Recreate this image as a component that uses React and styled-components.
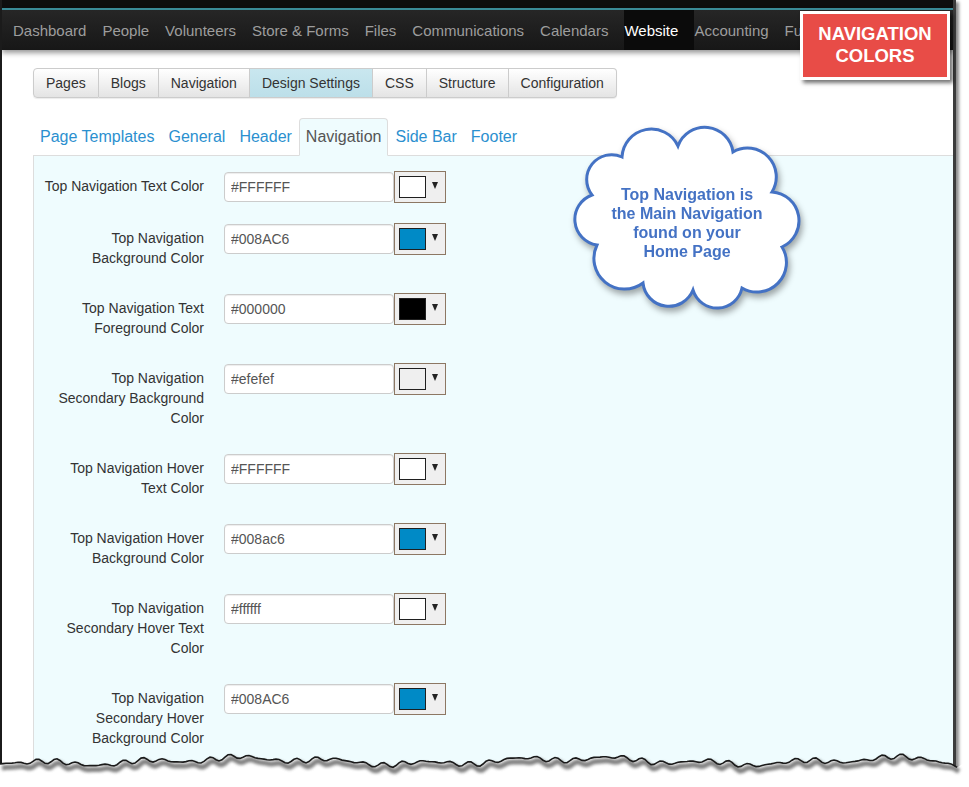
import React from 'react'
import styled, { createGlobalStyle } from 'styled-components'

const GlobalStyle = createGlobalStyle`
  html, body {
    margin: 0;
    padding: 0;
    background: #fff;
  }
  body {
    font-family: "Liberation Sans", Arial, sans-serif;
  }
  * {
    box-sizing: border-box;
  }
`

const mainNav = ['Dashboard', 'People', 'Volunteers', 'Store & Forms', 'Files', 'Communications', 'Calendars', 'Website', 'Accounting', 'Fundraising']
const subNav = ['Pages', 'Blogs', 'Navigation', 'Design Settings', 'CSS', 'Structure', 'Configuration']
const tabs = ['Page Templates', 'General', 'Header', 'Navigation', 'Side Bar', 'Footer']

const rows = [
  { label: ['Top Navigation Text Color'], value: '#FFFFFF', color: '#ffffff' },
  { label: ['Top Navigation', 'Background Color'], value: '#008AC6', color: '#008ac6' },
  { label: ['Top Navigation Text', 'Foreground Color'], value: '#000000', color: '#000000' },
  { label: ['Top Navigation', 'Secondary Background', 'Color'], value: '#efefef', color: '#efefef' },
  { label: ['Top Navigation Hover', 'Text Color'], value: '#FFFFFF', color: '#ffffff' },
  { label: ['Top Navigation Hover', 'Background Color'], value: '#008ac6', color: '#008ac6' },
  { label: ['Top Navigation', 'Secondary Hover Text', 'Color'], value: '#ffffff', color: '#ffffff' },
  { label: ['Top Navigation', 'Secondary Hover', 'Background Color'], value: '#008AC6', color: '#008ac6' },
]

// cloud callout outline: notches between lobes, joined by outward arcs
const cloudPoints = [
  [592, 195], [622, 157], [678, 146], [733, 152], [772, 192],
  [782, 247], [742, 288], [693, 290], [643, 283], [597, 245],
]

const cloudPath = () => {
  let d = `M ${cloudPoints[0][0]} ${cloudPoints[0][1]}`
  cloudPoints.forEach((p, i) => {
    const n = cloudPoints[(i + 1) % cloudPoints.length]
    const c = Math.hypot(n[0] - p[0], n[1] - p[1]) / 2
    const r = (c * 1.03).toFixed(1)
    d += ` A ${r} ${r} 0 0 1 ${n[0]} ${n[1]}`
  })
  return d + ' Z'
}

// ragged bottom edge of the clipped screenshot
const tornEdge = () => {
  const pts = []
  for (let x = 0; x <= 957; x += 3) {
    const y = 761
      + Math.sin(x * 0.019) * 2.6
      + Math.sin(x * 0.067 + 1.3) * 2
      + Math.sin(x * 0.29 + 0.7) * 1.5
      + Math.sin(x * 1.73) * 1.2
      + (x > 935 ? (x - 935) * 0.25 : 0)
    pts.push([x, +y.toFixed(1)])
  }
  return pts
}

export default function App() {
  const edge = tornEdge()
  const edgeLine = edge.map(p => p.join(',')).join(' ')
  const shadowLine = edge.map(p => `${p[0] + 2},${p[1] + 4}`).join(' ')

  return (
    <Page>
      <GlobalStyle />
      <Frame>
        <TopStrip>
          <NavBar>
            <NavList>
              {mainNav.map(item => (
                <NavItem key={item} $active={item === 'Website'}>{item}</NavItem>
              ))}
            </NavList>
          </NavBar>
        </TopStrip>

        <Content>
          <ButtonGroup>
            {subNav.map(item => (
              <GroupButton key={item} $active={item === 'Design Settings'}>{item}</GroupButton>
            ))}
          </ButtonGroup>

          <Tabs>
            {tabs.map(tab => (
              <Tab key={tab} $active={tab === 'Navigation'}>{tab}</Tab>
            ))}
          </Tabs>

          <Panel>
            {rows.map((row, i) => (
              <Row key={i}>
                <Label>
                  {row.label.map(line => <span key={line}>{line}</span>)}
                </Label>
                <InputGroup>
                  <HexInput readOnly value={row.value} />
                  <SwatchButton>
                    <Swatch style={{ background: row.color }} />
                    <Caret />
                  </SwatchButton>
                </InputGroup>
              </Row>
            ))}
          </Panel>
        </Content>
      </Frame>

      <Badge>
        <span>NAVIGATION</span>
        <span>COLORS</span>
      </Badge>

      <Cloud>
        <svg width="240" height="205" viewBox="570 116 240 205">
          <path d={cloudPath()} fill="#fff" stroke="#4472c4" strokeWidth="3" />
        </svg>
        <CloudText>
          Top Navigation is<br />
          the Main Navigation<br />
          found on your<br />
          Home Page
        </CloudText>
      </Cloud>

      <TornEdge width="969" height="47" viewBox="0 740 969 47">
        <defs>
          <filter id="soft" x="-5%" y="-100%" width="110%" height="300%">
            <feGaussianBlur stdDeviation="1.8" />
          </filter>
        </defs>
        <polygon points={`${edgeLine} 969,760 969,787 0,787`} fill="#fff" />
        <polyline points={shadowLine} fill="none" stroke="#555" strokeWidth="5" opacity="0.75" filter="url(#soft)" />
        <polyline points={edgeLine} fill="none" stroke="#1a1a1a" strokeWidth="1.6" />
      </TornEdge>
    </Page>
  )
}

const Page = styled.div`
  position: relative;
  width: 969px;
  height: 787px;
  overflow: hidden;
  background: #fff;
`

const Frame = styled.div`
  width: 956px;
  height: 787px;
  overflow: hidden;
  background: #fff;
  border-left: 2px solid #1b1b1b;
  border-right: 3px solid #3c3c3c;
  box-shadow: 3px 2px 3px rgba(0, 0, 0, 0.45);
`

const TopStrip = styled.div`
  padding-top: 8px;
  background: #0e0e0e;
  position: relative;
  z-index: 1;
`

const NavBar = styled.nav`
  position: relative;
  z-index: 1;
  height: 42px;
  padding-left: 3px;
  border-top: 2px solid #3a8b97;
  background: linear-gradient(to bottom, #262626, #171717);
  box-shadow: 0 3px 5px rgba(0, 0, 0, 0.4);
`

/* the callout badge hides the tail of the menu, so the list stops at its edge */
const NavList = styled.div`
  display: flex;
  width: 796px;
  height: 100%;
  overflow: hidden;
`

const NavItem = styled.div`
  position: relative;
  display: flex;
  align-items: center;
  padding: 0 8px;
  font-size: 15px;
  white-space: nowrap;
  color: ${p => (p.$active ? '#ffffff' : '#9d9d9d')};

  ${p => p.$active && `
    &::before {
      content: '';
      position: absolute;
      top: 0;
      bottom: 0;
      left: 8px;
      right: -8px;
      background: #0b0b0b;
      z-index: -1;
    }
  `}
`

const Content = styled.div`
  padding: 18px 0 0 31px;
`

const ButtonGroup = styled.div`
  display: inline-flex;
  border-radius: 4px;
  box-shadow: 0 1px 1px rgba(0, 0, 0, 0.08);
`

const GroupButton = styled.div`
  height: 30px;
  display: flex;
  align-items: center;
  padding: 0 12px;
  font-size: 14px;
  color: #333;
  white-space: nowrap;
  border: 1px solid #cccccc;
  border-left: none;
  background: ${p => (p.$active
    ? 'linear-gradient(to bottom, #c9e7ef, #bcdfe9)'
    : 'linear-gradient(to bottom, #ffffff, #e4e4e4)')};

  &:first-child {
    border-left: 1px solid #cccccc;
    border-radius: 4px 0 0 4px;
  }
  &:last-child {
    border-radius: 0 4px 4px 0;
  }
`

const Tabs = styled.div`
  display: flex;
  margin-top: 20px;
  border-bottom: 1px solid #dddddd;
`

const Tab = styled.div`
  padding: 8px 6px;
  margin-bottom: -1px;
  font-size: 16px;
  line-height: 20px;
  white-space: nowrap;
  border: 1px solid transparent;
  border-radius: 4px 4px 0 0;
  color: ${p => (p.$active ? '#555555' : '#2b90cf')};
  background: ${p => (p.$active ? '#effcfe' : 'transparent')};
  border-color: ${p => (p.$active ? '#dddddd #dddddd #effcfe' : 'transparent')};
`

const Panel = styled.div`
  padding: 15px 0 120px 0;
  background: #effcfe;
  border-left: 1px solid #dddddd;
`

const Row = styled.div`
  display: grid;
  grid-template-columns: 170px auto;
  column-gap: 20px;
  align-items: start;
  margin-bottom: 20px;
`

const Label = styled.div`
  display: flex;
  flex-direction: column;
  align-items: flex-end;
  padding: 5px 0;
  font-size: 14px;
  line-height: 20px;
  color: #333;
  white-space: nowrap;
`

const InputGroup = styled.div`
  display: flex;
  align-items: center;
  height: 32px;
`

const HexInput = styled.input`
  width: 170px;
  height: 30px;
  padding: 0 6px;
  font-family: "Liberation Sans", Arial, sans-serif;
  font-size: 14px;
  color: #555;
  background: #fff;
  border: 1px solid #cccccc;
  border-radius: 4px;
  box-shadow: inset 0 1px 1px rgba(0, 0, 0, 0.075);
  outline: none;
`

const SwatchButton = styled.div`
  display: flex;
  align-items: flex-start;
  width: 52px;
  height: 32px;
  padding: 4px 0 0 4px;
  background: #efefef;
  border: 1px solid #8c7763;
`

const Swatch = styled.div`
  width: 27px;
  height: 22px;
  border: 1px solid #1f1f1f;
`

const Caret = styled.div`
  width: 0;
  height: 0;
  margin: 6px 0 0 6px;
  border-left: 3.5px solid transparent;
  border-right: 3.5px solid transparent;
  border-top: 7px solid #222;
`

const Badge = styled.div`
  position: absolute;
  left: 800px;
  top: 11px;
  width: 150px;
  height: 69px;
  display: flex;
  flex-direction: column;
  align-items: center;
  justify-content: center;
  padding-bottom: 2px;
  border: 3px solid #ffffff;
  background: #e84c47;
  color: #ffffff;
  font-weight: 700;
  font-size: 18.5px;
  line-height: 22px;
  box-shadow: 3px 3px 4px rgba(0, 0, 0, 0.55);
  z-index: 2;
`

const Cloud = styled.div`
  position: absolute;
  left: 570px;
  top: 116px;
  width: 240px;
  height: 205px;
  filter: drop-shadow(2px 4px 3px rgba(0, 0, 0, 0.35));

  svg {
    display: block;
  }
`

const CloudText = styled.div`
  position: absolute;
  left: 0;
  top: 69px;
  width: 234px;
  text-align: center;
  font-weight: 700;
  font-size: 16px;
  line-height: 19px;
  color: #4472c4;
`

const TornEdge = styled.svg`
  position: absolute;
  left: 0;
  top: 740px;
  display: block;
`
